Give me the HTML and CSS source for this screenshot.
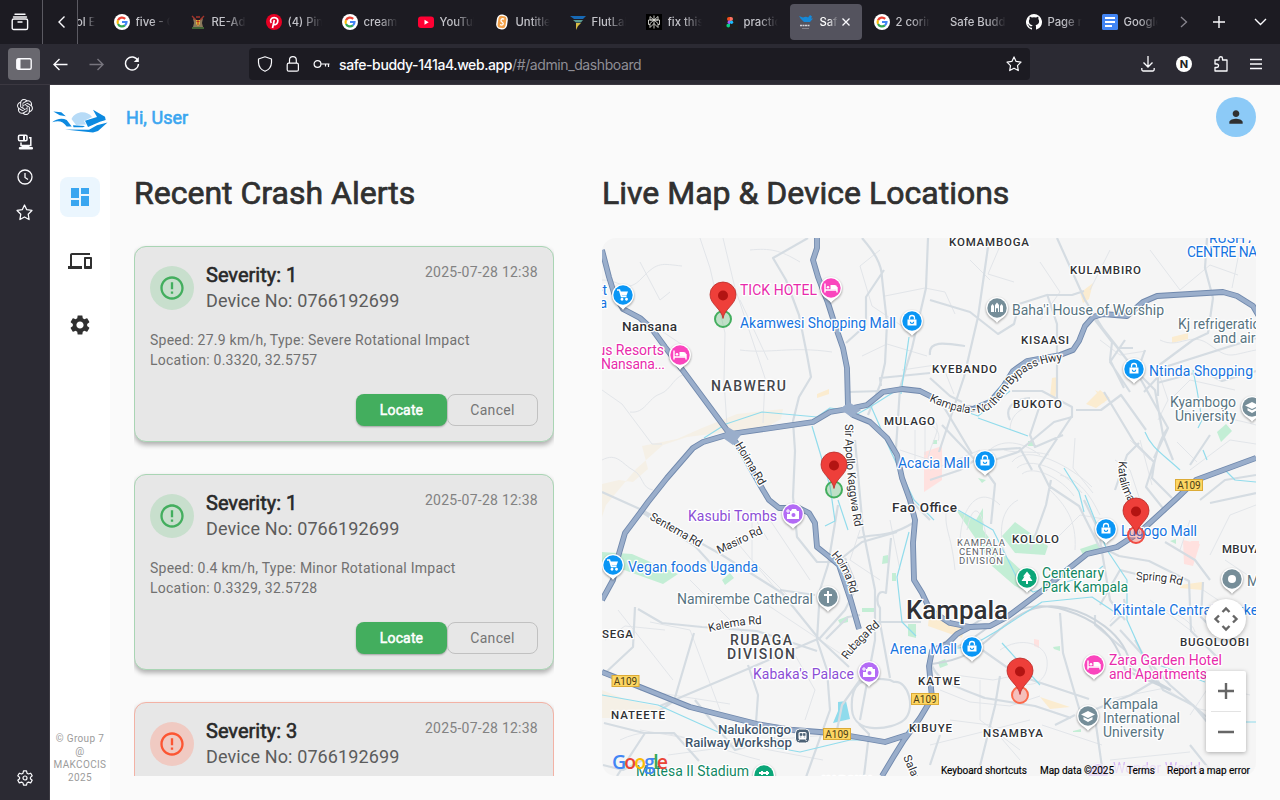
FILE: index.html
```html
<!DOCTYPE html>
<html lang="en">
<head>
<meta charset="utf-8">
<title>Safe Buddy</title>
<link rel="stylesheet" href="styles.css">
</head>
<body>
<svg class="defs" width="0" height="0">
  <defs>
    <symbol id="google" viewBox="0 0 16 16"><circle cx="8" cy="8" r="8" fill="#fff"/><g fill="none" stroke-width="2.2"><path d="M4 6.2A4.5 4.5 0 0 1 11.2 4.9" stroke="#ea4335"/><path d="M4 6.2A4.5 4.5 0 0 0 4 9.9" stroke="#fbbc05"/><path d="M4 9.9A4.5 4.5 0 0 0 10.9 11.4" stroke="#34a853"/><path d="M8 8h4.5A4.5 4.5 0 0 1 10.9 11.4" stroke="#4285f4"/></g></symbol>
    <symbol id="star" viewBox="0 0 16 16"><path d="M8 .9l2.1 4.5 4.900.7-3.500 3.500.8 5L8 12.200l-4.300 2.400.8-5L1 6.100l4.900-.7z" fill="none" stroke="currentColor" stroke-width="1.2" stroke-linejoin="round"/></symbol>
    <symbol id="alert" viewBox="0 0 24 24"><path fill="currentColor" d="M11 15h2v2h-2zm0-8h2v6h-2zm.99-5C6.47 2 2 6.48 2 12s4.47 10 9.99 10C17.52 22 22 17.52 22 12S17.52 2 11.99 2zM12 20c-4.42 0-8-3.58-8-8s3.58-8 8-8 8 3.58 8 8-3.58 8-8 8z"/></symbol>
    <symbol id="gear" viewBox="0 0 24 24"><path fill="currentColor" d="M19.14 12.94c.04-.3.06-.61.06-.94 0-.32-.02-.64-.07-.94l2.03-1.58c.18-.14.23-.41.12-.61l-1.92-3.32c-.12-.22-.37-.29-.59-.22l-2.39.96c-.5-.38-1.03-.7-1.62-.94l-.36-2.54c-.04-.24-.24-.41-.48-.41h-3.84c-.24 0-.43.17-.47.41l-.36 2.54c-.59.24-1.13.57-1.62.94l-2.39-.96c-.22-.08-.47 0-.59.22L2.74 8.87c-.12.21-.08.47.12.61l2.03 1.58c-.05.3-.09.63-.09.94s.02.64.07.94l-2.03 1.58c-.18.14-.23.41-.12.61l1.92 3.32c.12.22.37.29.59.22l2.39-.96c.5.38 1.03.7 1.62.94l.36 2.54c.05.24.24.41.48.41h3.84c.24 0 .44-.17.47-.41l.36-2.54c.59-.24 1.13-.56 1.62-.94l2.39.96c.22.08.47 0 .59-.22l1.92-3.32c.12-.22.07-.47-.12-.61l-2.01-1.58zM12 15.6c-1.98 0-3.6-1.62-3.6-3.6s1.62-3.6 3.6-3.6 3.6 1.62 3.6 3.6-1.62 3.6-3.6 3.6z"/></symbol>
    <g id="poi"><path class="poi-rim" d="M0 15C-2 11-11 9-11 0A11 11 0 0 1 11 0C11 9 2 11 0 15z"/><circle r="9.7"/></g>
    <g id="bag"><path fill="#fff" d="M-4.500-1.500H4.500V4.500H-4.500z"/><path d="M-2.500-1.500V-3a2.500 2.500 0 0 1 5 0V-1.500" fill="none" stroke="#fff" stroke-width="1.300"/><path d="M-1.700 0.800a1.700 1.700 0 0 0 3.400 0" fill="none" stroke="#0a96f5" stroke-width="1.2"/></g>
    <g id="cart" fill="none" stroke="#fff" stroke-width="1.500"><path d="M-6-5h2.500l2 6.500h5"/><path d="M-3-3.500h8l-1.500 4h-5z" fill="#fff" stroke="none"/><circle cx="-1" cy="4.200" r=".7"/><circle cx="3.500" cy="4.200" r=".7"/></g>
    <g id="bed" fill="none" stroke="#fff" stroke-width="1.400"><path d="M-6-4.500V4.500M-6 2H6M6 4.500V-1"/><path d="M-.5-3H3.500a2.500 2 0 0 1 2.500 2V1.500H-.5z" fill="#fff" stroke="none"/><circle cx="-3" cy="-.8" r="1.300" fill="#fff" stroke="none"/></g>
    <g id="camera"><path fill="#fff" d="M-2-3l1-2H3l1 2H6V5H-6V0h3v-3z"/><circle cx="0.500" cy="1" r="2" fill="#b36bf5"/><path d="M-5-5v4M-7-3h4" stroke="#fff" stroke-width="1"/></g>
    <g id="cap"><path fill="#fff" d="M0-5L7-1.500 0 2-7-1.500zM-4.500 1V3.500L0 6l4.500-2.500V1L0 3.300z"/></g>
    <g id="pin"><path fill="#ee3f3a" stroke="#b92b28" stroke-width=".8" d="M0 0C-1.500-10-13-14-13-24A13 12.500 0 0 1 13-24C13-14 1.500-10 0 0z"/><circle cy="-23" r="5" fill="#b31412"/></g>
    <g id="shield"><rect x="-13.500" y="-5.500" width="27" height="11" fill="#fdd663" stroke="#dcab37"/><text y="3.600" text-anchor="middle" class="shield-text">A109</text></g>
    <g id="hw">
      <path d="M602 250l7 27 5 16 9 16 17 9 12 11 13 18 16 21 48 65 8 11 26 46 6 10 10 8 20 0 10 5 6 10 2 24 10 8 12 10 12 36 8 28M817 238l0 10-4 12 5 17 10 26 7 22 8 23 4 20 1 40"/>
      <path d="M602 600l11-20 5-23 7-24 15-20 8-11 19-24 26-30 10-6 27-8 83-12 17-10 18-3 19-4 16-13 19-3 18 2 10 5 20 11 23 2 17-7 13-15 10-16 14-10 33-6 13-5 6-9 6-15 8-9 10-3 24 2 16-14 14-6 66-4 14 4 16 10 8 14"/>
      <path d="M848 410l5 5 17 7 17 16 10 17 5 23 8 22 5 20-2 23 1 37 8 13 8 17 20 13 20 4 20-1 17-9 36-27 24-20 20-16 30-7 23-15 36-33 20-19 60-22M970 627l-13 7-10 10-15 7-3 15 3 32-12 20-16 22-10 16-12 20M602 672l38 15 50 20 67 17 36 6 40 3 52 9 22-7"/>
    </g>
  </defs>
</svg>

<div class="tabbar">
  <div class="tab-tool first"><svg width="18" height="18" viewBox="0 0 18 18" fill="none" stroke="#fbfbfe" stroke-width="1.400" stroke-linecap="round"><path d="M4 1.200h10M2.500 4h13"/><rect x="1.200" y="6" width="15.400" height="10.500" rx="1.600"/><path d="M7 9h4"/></svg></div>
  <div class="tab-tool second"><svg width="9" height="14" viewBox="0 0 9 14" fill="none" stroke="#fbfbfe" stroke-width="1.400"><path d="M7.500 1.500L2 7l5.500 5.500"/></svg></div>
  <div class="tab partial"><span>ol E</span></div>
  <div class="tab"><svg width="16" height="16"><use href="#google"/></svg><span>five - G</span></div>
  <div class="tab"><svg width="16" height="16" viewBox="0 0 16 16"><path d="M3 4l3 2h4l3-2-1 5 1 4H3l1-4z" fill="#8a7a5c"/><path d="M2 2l4 4M14 2l-4 4M6 3h4" stroke="#a5342b" stroke-width="1.300"/><path d="M6 6h4v4l-2 2-2-2z" fill="#d7b83e"/><path d="M6.500 7.500h3M8 6v5" stroke="#b4281f"/><path d="M2 14h12" stroke="#4c7b3d" stroke-width="1.500"/></svg><span>RE-Adm</span></div>
  <div class="tab"><svg width="16" height="16" viewBox="0 0 16 16"><circle cx="8" cy="8" r="8" fill="#e60023"/><path d="M6.500 14L8.300 6M5.300 9.100C3.300 6.300 5.200 3.700 8.200 3.700c3 0 4.200 2.200 3.400 4.600-.8 2.500-3 2.900-4 1.400" fill="none" stroke="#fff" stroke-width="1.700"/></svg><span>(4) Pint</span></div>
  <div class="tab"><svg width="16" height="16"><use href="#google"/></svg><span>cream</span></div>
  <div class="tab"><svg width="16" height="16" viewBox="0 0 16 16"><rect y="2.500" width="16" height="11.500" rx="3" fill="#ff0033"/><path d="M6.500 5.800v5l4.200-2.500z" fill="#fff"/></svg><span>YouTube</span></div>
  <div class="tab"><svg width="16" height="16" viewBox="0 0 16 16"><rect x="2.500" y=".5" width="11" height="15" rx="5" fill="#fff" transform="rotate(8 8 8)"/><rect x="4" y="2" width="8" height="12" rx="3" fill="#f2a14a" transform="rotate(8 8 8)"/><path d="M10.200 5.200C7.500 3.700 5.800 6.700 8 8s1.500 4-2 2.600" fill="none" stroke="#fff" stroke-width="1.300"/></svg><span>Untitled</span></div>
  <div class="tab"><svg width="16" height="16" viewBox="0 0 16 16"><path d="M0 2h16l-3 3H4z" fill="#1769b5"/><path d="M3 6h10l-2 2.500H6z" fill="#5c9b91"/><path d="M6 9h5l-3 3-2 4z" fill="#d8bd45"/></svg><span>FlutLab</span></div>
  <div class="tab"><svg width="16" height="16" viewBox="0 0 16 16"><rect width="16" height="16" fill="#000"/><path d="M8 1.500v13M4 2.500l4 3.500 4-3.500v3.500H4zM4 13.500l4-4 4 4V9.500M4 13.500V9.500M2.500 6h11v4.500H12M2.500 6v4.500H4M8 6l-4 3.500M8 6l4 3.500" fill="none" stroke="#d8d8d3" stroke-width=".9"/></svg><span>fix this</span></div>
  <div class="tab"><svg width="16" height="16" viewBox="0 0 16 16"><rect width="16" height="16" fill="#1e1e1e"/><path d="M8 3H7a2 2 0 0 0 0 4h1z" fill="#f24e1e"/><path d="M8 3h1a2 2 0 0 1 0 4H8z" fill="#ff7262"/><path d="M8 6.500H7a1.800 1.800 0 0 0 0 3.500h1z" fill="#a259ff"/><circle cx="9.500" cy="8.200" r="1.700" fill="#1abcfe"/><path d="M8 10H7a1.800 1.800 0 1 0 1 1.500z" fill="#0acf83"/></svg><span>practic</span></div>
  <div class="tab active"><svg width="16" height="16" viewBox="0 0 16 16"><path d="M1 2l4 1.500c2-1 4-1 5 0L12 1l2 1.500-1 2 2 0-3 3.500H6L2.500 4.500z" fill="#1689d8"/><path d="M2 11.500h10" stroke="#d0d0d6" stroke-width="1.600" stroke-dasharray="2 .5"/><path d="M4 14.500h7" stroke="#85848d"/></svg><span>Safe</span><svg class="close" width="8" height="8" viewBox="0 0 8 8"><path d="M.5.5l7 7m0-7l-7 7" stroke="#fbfbfe" stroke-width="1.300"/></svg></div>
  <div class="tab"><svg width="16" height="16"><use href="#google"/></svg><span>2 corint</span></div>
  <div class="tab"><span class="wide">Safe Buddy</span></div>
  <div class="tab"><svg width="16" height="16" viewBox="0 0 16 16"><path fill="#fff" d="M8 0a8 8 0 0 0-2.500 15.600c.4.100.5-.2.500-.4v-1.500c-2 .5-2.700-.8-2.900-1.400-.1-.3-.6-1-1-1.200-.3-.2-.8-.6 0-.6.700 0 1.200.6 1.400.9.800 1.300 2 1 2.600.700.100-.5.300-.9.500-1.100-1.900-.2-3.700-1-3.700-4 0-.9.300-1.600.8-2.100-.1-.2-.3-1 .1-2.100 0 0 .7-.2 2.200.8a7 7 0 0 1 4 0c1.500-1 2.200-.8 2.200-.8.400 1.100.2 1.900.1 2.100.5.600.8 1.300.8 2.100 0 3.100-1.900 3.800-3.600 4 .3.200.5.700.5 1.400v2.800c0 .2.100.5.500.4A8 8 0 0 0 8 0z"/></svg><span>Page n</span></div>
  <div class="tab"><svg width="16" height="16" viewBox="0 0 16 16"><rect width="16" height="16" rx="1.500" fill="#4285f4"/><path d="M3 4h10M3 8h10M3 12h7" stroke="#fff" stroke-width="2"/></svg><span>Google</span></div>
  <div class="tab-end">
    <svg width="8" height="12" viewBox="0 0 8 12" fill="none" stroke="#88868f" stroke-width="1.300"><path d="M1 1l5.500 5L1 11"/></svg>
    <svg width="12" height="12" viewBox="0 0 12 12" stroke="#fbfbfe" stroke-width="1.400"><path d="M6 0v12M0 6h12"/></svg>
    <svg width="13" height="8" viewBox="0 0 13 8" fill="none" stroke="#fbfbfe" stroke-width="1.400"><path d="M1 1l5.500 5.500L12 1"/></svg>
  </div>
</div>

<div class="toolbar">
  <div class="side-toggle"><svg width="16" height="12" viewBox="0 0 16 12"><rect x=".8" y=".8" width="14.400" height="10.400" rx="1.500" fill="none" stroke="#fbfbfe" stroke-width="1.400"/><path d="M1 1h3.500v10H1z" fill="#fbfbfe"/></svg></div>
  <svg class="back" width="15" height="13" viewBox="0 0 15 13" fill="none" stroke="#fbfbfe" stroke-width="1.400"><path d="M14.500 6.500H1M6.500 1L1 6.500 6.500 12"/></svg>
  <svg class="forward" width="15" height="13" viewBox="0 0 15 13" fill="none" stroke="#77757e" stroke-width="1.400"><path d="M.5 6.500H14M8.500 1L14 6.500 8.500 12"/></svg>
  <svg class="reload" width="16" height="16" viewBox="0 0 16 16" fill="none" stroke="#fbfbfe" stroke-width="1.400"><path d="M13.800 4.500A6.500 6.500 0 1 0 14.500 8"/><path d="M14.800 1v5h-5z" fill="#fbfbfe" stroke="none"/></svg>
  <div class="urlbar">
    <svg width="16" height="16" viewBox="0 0 16 16" fill="none" stroke="#fbfbfe" stroke-width="1.200"><path d="M8 .8L14.500 3v3.500C14.300 10.500 12 13.800 8 15.300 4 13.800 1.700 10.500 1.500 6.500V3z" stroke-linejoin="round"/></svg>
    <svg width="16" height="16" viewBox="0 0 16 16" fill="none" stroke="#fbfbfe" stroke-width="1.200"><rect x="2.200" y="7.200" width="11.200" height="8" rx="1.500"/><path d="M4.500 7V4a3.400 3.400 0 0 1 6.800 0v3"/></svg>
    <svg width="17" height="16" viewBox="0 0 17 16" fill="none" stroke="#fbfbfe" stroke-width="1.200"><circle cx="4.500" cy="8" r="3.400"/><path d="M8 8h8.500M15.500 8v3M12.500 8v2.500"/></svg>
    <div class="url"><b>safe-buddy-141a4.web.app</b>/#/admin_dashboard</div>
    <svg class="bookmark" width="16" height="16"><use href="#star"/></svg>
  </div>
  <div class="actions">
    <svg width="14" height="16" viewBox="0 0 14 16" fill="none" stroke="#fbfbfe" stroke-width="1.300"><path d="M7 0v11M2.500 6.500L7 11l4.500-4.500M.8 12v1.500a1.500 1.500 0 0 0 1.500 1.500h9.400a1.500 1.500 0 0 0 1.500-1.500V12"/></svg>
    <div class="notion">N</div>
    <svg width="16" height="16" viewBox="0 0 16 16" fill="none" stroke="#fbfbfe" stroke-width="1.300" stroke-linejoin="round"><path d="M2 6.500V4h4V2.500a1.700 1.700 0 0 1 3.500 0V4H14v11H2v-3.500H3.800a1.700 1.700 0 0 0 0-3.500H2z"/></svg>
    <svg width="12" height="12" viewBox="0 0 12 12" stroke="#fbfbfe" stroke-width="1.300"><path d="M0 1.500h12M0 6h12M0 10.500h12"/></svg>
  </div>
</div>

<div class="body">
  <aside class="browser-side">
    <svg width="16" height="16" viewBox="0 0 24 24"><path fill="#f2f2f6" d="M22.2819 9.8211a5.9847 5.9847 0 0 0-.5157-4.9108 6.0462 6.0462 0 0 0-6.5098-2.9A6.0651 6.0651 0 0 0 4.9807 4.1818a5.9847 5.9847 0 0 0-3.9977 2.9 6.0462 6.0462 0 0 0 .7427 7.0966 5.98 5.98 0 0 0 .511 4.9107 6.051 6.051 0 0 0 6.5146 2.9001A5.9847 5.9847 0 0 0 13.2599 24a6.0557 6.0557 0 0 0 5.7718-4.2058 5.9894 5.9894 0 0 0 3.9977-2.9001 6.0557 6.0557 0 0 0-.7475-7.0729zm-9.022 12.6081a4.4755 4.4755 0 0 1-2.8764-1.0408l.1419-.0804 4.7783-2.7582a.7948.7948 0 0 0 .3927-.6813v-6.7369l2.02 1.1686a.071.071 0 0 1 .038.052v5.5826a4.504 4.504 0 0 1-4.4945 4.4944zm-9.6607-4.1254a4.4708 4.4708 0 0 1-.5346-3.0137l.142.0852 4.783 2.7582a.7712.7712 0 0 0 .7806 0l5.8428-3.3685v2.3324a.0804.0804 0 0 1-.0332.0615L9.74 19.9502a4.4992 4.4992 0 0 1-6.1408-1.6464zM2.3408 7.8956a4.485 4.485 0 0 1 2.3655-1.9728V11.6a.7664.7664 0 0 0 .3879.6765l5.8144 3.3543-2.0201 1.1685a.0757.0757 0 0 1-.071 0l-4.8303-2.7865A4.504 4.504 0 0 1 2.3408 7.872zm16.5963 3.8558L13.1038 8.364 15.1192 7.2a.0757.0757 0 0 1 .071 0l4.8303 2.7913a4.4944 4.4944 0 0 1-.6765 8.1042v-5.6772a.79.79 0 0 0-.407-.667zm2.0107-3.0231l-.142-.0852-4.7735-2.7818a.7759.7759 0 0 0-.7854 0L9.409 9.2297V6.8974a.0662.0662 0 0 1 .0284-.0615l4.8303-2.7866a4.4992 4.4992 0 0 1 6.6802 4.66zM8.3065 12.863l-2.02-1.1638a.0804.0804 0 0 1-.038-.0567V6.0742a4.4992 4.4992 0 0 1 7.3757-3.4537l-.142.0805L8.704 5.459a.7948.7948 0 0 0-.3927.6813zm1.0976-2.3654l2.602-1.4998 2.6069 1.4998v2.9994l-2.5974 1.4997-2.6067-1.4997Z"/></svg>
    <svg width="16" height="16" viewBox="0 0 16 16" fill="none" stroke="#fbfbfe" stroke-width="1.500"><rect x="1.500" y="1.200" width="8.500" height="5.600" rx="1.200"/><path d="M7 1v5.500" stroke-width="2"/><path d="M12 3.800h1.800v7.700H4V8.500"/><path d="M3 13h1.500v-1.500h8V13H15a.8.8 0 0 1 0 2.500H3a1.200 1.200 0 0 1 0-2.500z" fill="#fbfbfe" stroke="none"/></svg>
    <svg width="16" height="16" viewBox="0 0 16 16" fill="none" stroke="#fbfbfe" stroke-width="1.300"><circle cx="8" cy="8" r="7"/><path d="M8 4v4.500l3 2"/></svg>
    <svg width="17" height="17"><use href="#star"/></svg>
    <svg class="bottom" width="16" height="16" viewBox="0 0 16 16" fill="none" stroke="#fbfbfe" stroke-width="1.200" stroke-linejoin="round"><path d="M6.500.8h3l.5 2.400 1.400.8 2.300-.8 1.500 2.600-1.800 1.600v1.300l1.800 1.600-1.500 2.600-2.300-.8-1.400.8-.5 2.300h-3L6 12.900l-1.400-.8-2.300.8L.8 10.300l1.800-1.600V7.400L.8 5.800l1.500-2.600 2.300.8L6 3.200z"/><circle cx="8" cy="8" r="2"/></svg>
  </aside>

  <nav class="nav">
    <svg class="logo" width="56" height="24" viewBox="0 0 56 24"><path d="M19.500 10C23 2 35 1 40 8l-8 4 2 3.500-10 .5z" fill="#b7dbf7"/><path d="M1.300 2.500l8 .8 4.500 4-6-1zM.2 13.300C4 10 10 8.500 14.700 11l5 6.500h-5C11 12.500 7 11 .2 13.300zM41 .8L53 7.700l.7 3.300-5.700 1.700-12 5.300-3-6.300 12-3.700zM21 16.300l12 .8-2 1.200h-9.500zM13 20.500l24 .3 8-4.600 10.500-2.800-9.500 8.600-5 1.500z" fill="#0d8ae0"/></svg>
    <div class="nav-item selected"><svg width="24" height="24" viewBox="0 0 24 24"><path fill="#3aa6f0" d="M3 13h8V3H3v10zm0 8h8v-6H3v6zm10 0h8V11h-8v10zm0-18v6h8V3h-8z"/></svg></div>
    <div class="nav-item"><svg width="24" height="24" viewBox="0 0 24 24"><path fill="#303030" d="M4 6h18V4H4c-1.100 0-2 .9-2 2v11H0v3h14v-3H4V6zm19 2h-6c-.55 0-1 .45-1 1v10c0 .55.45 1 1 1h6c.55 0 1-.45 1-1V9c0-.55-.45-1-1-1zm-1 9h-4v-7h4v7z"/></svg></div>
    <div class="nav-item"><svg class="gear" width="24" height="24"><use href="#gear"/></svg></div>
    <div class="copyright">© Group 7<br>@<br>MAKCOCIS<br>2025</div>
  </nav>

  <main class="main">
    <header class="header">
      <div class="greeting">Hi, User</div>
      <div class="avatar"><svg width="20" height="20" viewBox="0 0 24 24"><path fill="#303030" d="M12 12c2.210 0 4-1.790 4-4s-1.790-4-4-4-4 1.790-4 4 1.790 4 4 4zm0 2c-2.670 0-8 1.340-8 4v2h16v-2c0-2.660-5.330-4-8-4z"/></svg></div>
    </header>
    <div class="columns">
      <section class="alerts">
        <h1>Recent Crash Alerts</h1>
        <div class="alert-list">
          <article class="card">
            <div class="card-top"><div class="badge"><svg width="28" height="28"><use href="#alert"/></svg></div><div class="who"><div class="severity">Severity: 1</div><div class="device">Device No: 0766192699</div></div><time>2025-07-28 12:38</time></div>
            <p>Speed: 27.9 km/h, Type: Severe Rotational Impact<br>Location: 0.3320, 32.5757</p>
            <div class="buttons"><button class="locate">Locate</button><button class="cancel">Cancel</button></div>
          </article>
          <article class="card">
            <div class="card-top"><div class="badge"><svg width="28" height="28"><use href="#alert"/></svg></div><div class="who"><div class="severity">Severity: 1</div><div class="device">Device No: 0766192699</div></div><time>2025-07-28 12:38</time></div>
            <p>Speed: 0.4 km/h, Type: Minor Rotational Impact<br>Location: 0.3329, 32.5728</p>
            <div class="buttons"><button class="locate">Locate</button><button class="cancel">Cancel</button></div>
          </article>
          <article class="card severe">
            <div class="card-top"><div class="badge"><svg width="28" height="28"><use href="#alert"/></svg></div><div class="who"><div class="severity">Severity: 3</div><div class="device">Device No: 0766192699</div></div><time>2025-07-28 12:38</time></div>
          </article>
        </div>
      </section>
      <section class="live">
        <h1>Live Map &amp; Device Locations</h1>
        <svg class="map" width="654" height="538" viewBox="602 238 654 538">
          <rect x="602" y="238" width="654" height="538" fill="#f5f5f5"/>
          <!-- land use -->
          <g fill="#f5f0e6">
            <path d="M602 484l17-4 14 2 15-13-6-23 35-7 25-11 35-14 46-5-2 10-14 8-80 10-24 8-27 24-30 36-20 60-14 26z"/>
            <path d="M602 690l25 10 38 8-20 10-43 0z"/>
          </g>
          <g fill="#fbecd0">
            <path d="M817 394l12-5v5l-12 4zM1080 293l13-10-4 16-6 4zM1086 404l14-14 10 8-14 10zM1095 390l12 7-3 6zM1052 378l6-1-3 22-5-2zM1172 337l16-4v6l-16 4zM1180 585l22-3v8l-22-2zM930 605l10 15 25 6-3 12-34-12zM1040 697l30 10-20 2z"/>
          </g>
          <g fill="#c3eed5">
            <path d="M602 552l30 2 46 20-15 10-61-22zM722 580l8-7 4 5-9 7zM883 556l5-1v8l-6 1zM892 573h4v8h-4zM956 510l20 10 7-12v22l16 20 22 20 8 22-14-6-23-20-14-24zM1002 536l13-14 33 24-3 9-30-2zM1080 549l18-6 4 10-18 4zM1217 432l9-8 6 7-5 5-6 6zM1170 541l6-2v5zM1028 441h6v5h-6zM908 624h8v14l-8-2zM838 620l10-4 0 6-8 2zM1053 647l7-1v5l-6-2zM933 440h4v4h-4zM938 662l7-3 3 6-8 3zM1073 731l8-2v3h-8zM862 608h12v4h-12zM978 478l8 2-4 3z"/>
          </g>
          <path fill="#8fdbec" d="M838 702l8-1 4 18-17 4 5-12z"/>
          <g fill="#ffe1df"><path d="M924 452l18-6v34l-18 12zM1183 540l17 4-7 22-9-2zM1034 639l5 1v8l-5-2zM1190 541h9v6z"/></g>
          <!-- tracks -->
          <g class="track">
            <path d="M700 238l10 30 15 65-1 48 3 45M723 238l12 50 20 60 10 30-2 45M602 280c20 0 24 15 40-2s20-14 40-12M602 390l20 14 30 40 10 0M660 330l30 20M602 460c15-8 20 4 31 10s8 18 20 20M630 412c15 2 18-14 30-18s14-20 28-20M640 262l20 38 10-8M750 250c20-2 30 0 50 12M740 350c30 4 50-4 92 2M740 300l28 60"/>
            <path d="M880 250l-20 16 12 40 30 20M885 296l40-8 20 4 10 22M862 356l25-12 40 12M902 370l40-6 12 30M1000 246l-12 28 26 8M1040 262l20 30-20 28M1110 250l-20 40M1150 250l30 40 30-25 28 10M1160 340c20 10 30-10 50 5s20 10 46 5M1100 340l20 15 26-4M1010 430c0-20 20-28 42-25M1075 438l-2 30 20 25M1180 410c30 8 40 5 76 15M1130 440l20 20M1190 470l40-30 26 4M1240 248l-8 40"/>
            <path d="M905 430c0-15 30-15 32-5s-8 20-10 40M915 430v30M925 425v30M985 455c15-20 40-12 55 0M960 545c0-40 20-60 40-40M955 570c-4-40-12-40-8-65M967 530c8-40 20-10 20 25M1008 560c-10-20-10-50 10-60M1050 545l30-30 30 5M1075 550c2-30-10-45-25-60M1012 462c15-20 60 5 80 25M1017 468c12-12 45 0 65 25M1022 474c12-10 40 5 52 22M1060 475c20 5 30 20 40 40"/>
            <path d="M618 610l55 70M650 622l40 8 30 80M640 690l90 14M690 580l60 60M752 510l0 50 40 40M770 520l40 60M735 540l40 48M760 600l90 60M605 640l20-14 40 4M640 730l80 14 120-10M668 755l75-10 80 15M620 740c40-20 80 5 140 20M795 655l20 35-10 30M860 530l-10 30 30 20M890 520l10 50M750 510l18 30"/>
            <path d="M940 690l30 12 40 4 30-10M955 675l38 5 40-8M950 720l40 5 30 35M930 745l100-25M1000 650c20-14 45-7 47 10s-10 30-30 22M980 680l0 40 40 30M1042 725l60 20M1110 622c20-30 80-10 85 10M1150 600l40 30M1210 555l20-40 26-10M1203 590l30 20M1190 520l-10 30M1225 560l30 20M1190 715l20-30 40 10M1105 700l60-12 30 20 46 10M1110 760l80-8"/>
            <path d="M908 425c18-8 35 4 30 16M900 450l30 10M930 470c14-4 25-10 50-20M1004 450c15 4 30 0 45 5M1115 460l15 10 10 30M1140 440l12 45M1170 400l20-20 45 10M990 280l-20-20M1156 365l12 35-10 20M1177 442l20 20"/>
          </g>
          <!-- local roads -->
          <g class="minor">
            <path d="M808 238l-35 20 13 22 13 35 8 40 4 22-12 20-6 24 2 30-2 46 4 40 20 25 20 0 25-20 35-10M862 238c12 14 20 26 20 40l5 45-2 40-5 22-12 30M884 270l-18 27 0 28-20 18M928 238l-2 50-14 60-12 40-4 60 14 60M848 392l68-2 26 14 30 50M881 386l-1-8 50-5"/>
            <path d="M988 247l-10 70-14 60-25 75M1057 238l28 62 20 32 30 38 20 20 8 45 10 25M930 300l40 12 28 22 16-10 5-20 28-9 25 0 12-4M1047 294l10 30 0 80M930 355c-2-15 15-12 35-9M930 378l20 18 12 6M1012 391l30 0 30 16 0 10-18 5-36 30-30 10M1125 340l-15 22 20 30M1093 316l25 32 15 0M1092 316l20 26-2 18 14 28M1207 238l-2 30 8 30-5 35-15 7-35 26 0 30M1145 350l-10 28M1256 338l-88 28-24 26M1157 383l45-12 20 10 34-10M1146 430l-25-35-20 15-25 0M1104 392l30 50 20 20-8 25 20 25M1140 378l28 50-14 30M1168 428c-8 10-14 30-16 50l20 20"/>
            <path d="M1072 416l-33 50 10 20 30 20 20 40 20 10 30 5 40 20 2 50 30 30M930 480l30-10 30-20 30-2 12 22M1040 405l-10 30 5 12 28-12M985 470l10 14-4 40M1030 550l16-45 5-25M942 425l38 40M930 520l-20-20M930 660c5 20 20 25 55 38l50 8 36 12M968 640l50 35M1017 675l72 24M1000 676l-5 30-15 60M1060 613l3 40 18 62 50-20 30-18M1095 615l0 10 30 25M1110 626l16-15-2-12M1135 640l28 50 30 15 15 18M1120 630l50 55 40 35M1095 718l8 56M1190 745l20 25M1075 715l-20 10M1165 542l30 18 15 20M1203 582l-2 35 20 20"/>
            <path d="M602 492l40 18 80 45 60 38 37 46 30 28M640 511l55 35 20 22M638 609l24 14 40 4 55 4 60 20M635 607l-2 40-30 28M694 633l-20 68-15 10M660 706l90-38 70-30 25-28 12-24-12-28M748 665l10 30-2 28M838 505l-10 60-8 25-3 50 10 30 3 40-25 70M855 440l8 90 12 60 0 50-15 80M858 538c20-5 30 0 55-15M891 538l-5 55c-10-5-10 10-6 15l0 15 10 55M780 590l35 5M860 615l-12 2-22 22M876 622l45 0M604 723l40 10 30 0 25 28M645 733l-28 43M860 680l-18 25-5 25M890 680c-30-5-40 5-38 30s40 20 52 10 5-40-10-38zM859 724l10 10-5 42M1010 420c-5-10 0-20 20-22M930 765l10-30"/>
            <path d="M1100 540l10 60 15 20M1100 533l-16-33M1115 490l12-35 12-12M1190 465l20-30M1200 500l25-20 31-5M1210 503l46-10M1140 575l-20-5-20 35M603 765l20 5 20-10M695 700l40 50 40-12"/>
          </g>
          <g class="rail"><path d="M930 655c30-5 45-18 65-33s45-20 70-12 50 20 60 60l45 20M932 664c40-5 50-20 72-38s40-23 62-18 60 24 65 60l40 22M940 645l55-34 12 8"/></g>
          <g class="water">
            <path d="M704 438l22-14 36-12 55 5 13-9 15 2M812 426l18 60 5 35-10 5M897 390l-27 17-18 10M870 404l22 50 22 46 20 20M909 337l-6 42-2 15M939 402l39 14 32-25M978 418l50 18M838 500l10 30M909 532l-12 45 5 45 14 14M602 695l56 10 60 27M762 745l38 7 50-12 28 0M1064 468l15 24 5 20M1145 432c6 15 15 20 35 38M1193 370l4 20 5 30-4 8M1203 450l4 10M1225 470l10 10 21 2M958 510l35 20 25 50 15 12 60-18 10-8M1085 495l22 55 20 30 0 40 18 40 60 22M930 650c45 0 50-10 72-22l40-26 50-5 30 20M1002 643l38 42M1256 722l-14 0"/>
          </g>
          <!-- highways: dark casing under a lighter fill -->
          <use href="#hw" class="highway casing"/>
          <use href="#hw" class="highway fill"/>
          <path d="M728 427l13 8-8 10-10-7zM840 409l9-7 12 8-10 7z" fill="#9aaecb"/>

          <g class="labels place">
            <text x="622" y="331" textLength="55" class="town">Nansana</text>
            <text x="711" y="391" textLength="75" class="area-lg">NABWERU</text>
            <text x="949" y="246" textLength="80">KOMAMBOGA</text>
            <text x="1070" y="274" textLength="71">KULAMBIRO</text>
            <text x="1021" y="344" textLength="48">KISAASI</text>
            <text x="932" y="373" textLength="65">KYEBANDO</text>
            <text x="1013" y="408" textLength="49">BUKOTO</text>
            <text x="884" y="425" textLength="51">MULAGO</text>
            <text x="892" y="512" textLength="65" class="town">Fao Office</text>
            <g class="dim"><text x="957" y="546" textLength="48">KAMPALA</text><text x="959" y="555" textLength="45">CENTRAL</text><text x="959" y="564" textLength="44">DIVISION</text></g>
            <text x="1012" y="543" textLength="47">KOLOLO</text>
            <text x="1222" y="553" textLength="40">MBUYA</text>
            <text x="1180" y="646" textLength="69">BUGOLOOBI</text>
            <text x="602" y="638" textLength="31">SEGA</text>
            <text x="730" y="645" textLength="62" class="area-lg">RUBAGA</text><text x="727" y="659" textLength="68" class="area-lg">DIVISION</text>
            <text x="611" y="719" textLength="54">NATEETE</text>
            <text x="918" y="685" textLength="42">KATWE</text>
            <text x="909" y="732" textLength="43">KIBUYE</text>
            <text x="983" y="737" textLength="60">NSAMBYA</text>
            <text x="822" y="784" textLength="52">KABOWA</text>
            <text x="906" y="619" textLength="102" class="city">Kampala</text>
          </g>
          <g class="labels road">
            <path id="h1" fill="none" stroke="none" d="M735 445L762 490"/><text><textPath href="#h1" textLength="48">Hoima Rd</textPath></text>
            <path id="h2" fill="none" stroke="none" d="M831 555Q847 572 851 599"/><text><textPath href="#h2" textLength="44">Hoima Rd</textPath></text>
            <path id="s1" fill="none" stroke="none" d="M845 424Q845 475 856 534"/><text><textPath href="#s1" textLength="104">Sir Apollo Kaggwa Rd</textPath></text>
            <path id="s2" fill="none" stroke="none" d="M649 519L704 550"/><text><textPath href="#s2" textLength="58">Sentema Rd</textPath></text>
            <path id="m1" fill="none" stroke="none" d="M719 554L766 532"/><text><textPath href="#m1" textLength="49">Masiro Rd</textPath></text>
            <path id="k1" fill="none" stroke="none" d="M709 632Q740 624 765 624"/><text><textPath href="#k1" textLength="53">Kalema Rd</textPath></text>
            <path id="r1" fill="none" stroke="none" d="M847 660Q862 640 885 622"/><text><textPath href="#r1" textLength="48">Rubaga Rd</textPath></text>
            <path id="n1" fill="none" stroke="none" d="M929 401C950 411 976 418 990 409C1008 398 1012 364 1061 361"/><text><textPath href="#n1" textLength="154">Kampala - Northern Bypass Hwy</textPath></text>
            <path id="kt" fill="none" stroke="none" d="M1119 461Q1116 482 1130 504"/><text><textPath href="#kt" textLength="44">Katalima</textPath></text>
            <path id="sp" fill="none" stroke="none" d="M1136 580Q1165 580 1184 586"/><text><textPath href="#sp" textLength="46">Spring Rd</textPath></text>
            <path id="sl" fill="none" stroke="none" d="M903 757L915 785"/><text><textPath href="#sl">Salama</textPath></text>
          </g>
          <use href="#shield" x="1189" y="485"/><use href="#shield" x="625.500" y="681"/><use href="#shield" x="837" y="734"/><use href="#shield" x="925" y="699"/>
          <g class="labels shop">
            <text x="607" y="295" text-anchor="end">Market</text><text x="607" y="308" text-anchor="end">a</text>
            <text x="740" y="328" textLength="156">Akamwesi Shopping Mall</text>
            <text x="1209" y="243" textLength="56">RUSH  AL</text><text x="1187" y="257" textLength="86">CENTRE NAAL</text>
            <text x="1149" y="376" textLength="104">Ntinda Shopping</text>
            <text x="898" y="468" textLength="72">Acacia Mall</text><text x="1121" y="536" textLength="76">Lugogo Mall</text>
            <text x="628" y="572" textLength="130">Vegan foods Uganda</text><text x="890" y="654" textLength="67">Arena Mall</text>
            <text x="1113" y="615" textLength="150">Kitintale Central Market</text>
          </g>
          <g class="labels hotel"><text x="740" y="295" textLength="77">TICK HOTEL</text><text x="664" y="355" text-anchor="end">us Resorts</text><text x="601" y="369" textLength="64">Nansana...</text><text x="1109" y="665" textLength="113">Zara Garden Hotel</text><text x="1109" y="679" textLength="98">and Apartments</text></g>
          <g class="labels civic"><text x="1012" y="315" textLength="152">Baha'i House of Worship</text><text x="1178" y="329" textLength="90">Kj refrigeration</text><text x="1213" y="343">and air</text><text x="1170" y="407" textLength="66">Kyambogo</text><text x="1175" y="421" textLength="61">University</text><text x="677" y="604" textLength="136">Namirembe Cathedral</text><text x="1103" y="709">Kampala</text><text x="1103" y="723" textLength="77">International</text><text x="1103" y="737" textLength="61">University</text><text x="1247" y="586">Mu</text></g>
          <g class="labels transit"><text x="718" y="734" textLength="73">Nalukolongo</text><text x="685" y="747" textLength="107">Railway Workshop</text></g>
          <g class="labels sight"><text x="688" y="521" textLength="89">Kasubi Tombs</text><text x="753" y="679" textLength="101">Kabaka's Palace</text></g>
          <g class="labels park"><text x="1042" y="578" textLength="62">Centenary</text><text x="1042" y="592" textLength="86">Park Kampala</text><text x="636" y="776" textLength="113">Mutesa II Stadium</text></g>

          <g fill="#0a96f5">
            <g transform="translate(623 295)"><use href="#poi"/><use href="#cart"/></g><g transform="translate(613 565)"><use href="#poi"/><use href="#cart"/></g>
            <g transform="translate(912 321)"><use href="#poi"/><use href="#bag"/></g><g transform="translate(1134 369)"><use href="#poi"/><use href="#bag"/></g><g transform="translate(985 461)"><use href="#poi"/><use href="#bag"/></g><g transform="translate(1106 529)"><use href="#poi"/><use href="#bag"/></g><g transform="translate(972 647)"><use href="#poi"/><use href="#bag"/></g>
          </g>
          <g fill="#fa45bd"><g transform="translate(831 288)"><use href="#poi"/><use href="#bed"/></g><g transform="translate(680 355)"><use href="#poi"/><use href="#bed"/></g><g transform="translate(1094 665)"><use href="#poi"/><use href="#bed"/></g></g>
          <g fill="#b36bf5"><g transform="translate(793 514)"><use href="#poi"/><use href="#camera"/></g><g transform="translate(869 672)"><use href="#poi"/><use href="#camera"/></g></g>
          <g fill="#768e99">
            <g transform="translate(997 308)"><use href="#poi"/><path d="M-6 4V-2l1.500-2L-3-2v6zM3 4V-2l1.500-2L6-2v6zM-2 4V-3L0-5.500 2-3V4H1V1a1 1 0 0 0-2 0V4z" fill="#fff"/></g>
            <g transform="translate(828 597)"><use href="#poi"/><path d="M0-6V6M-4-2h8" stroke="#fff" stroke-width="2"/></g>
            <g transform="translate(1252 407)"><use href="#poi"/><use href="#cap"/></g><g transform="translate(1088 716)"><use href="#poi"/><use href="#cap"/></g>
            <g transform="translate(1232 579)"><use href="#poi"/><circle r="4" fill="#fff"/></g>
          </g>
          <g transform="translate(1027 578)" fill="#0ba678"><use href="#poi"/><path d="M0-6.500L4-1.500H2.500L5.500 3H1v3h-2V3h-4.500L-2.500-1.500H-4z" fill="#fff"/></g>
          <g transform="translate(764 775)" fill="#0ba678"><use href="#poi"/><path d="M-5-2h10M-2-4v4M3-4v4" stroke="#fff" stroke-width="2"/></g>
          <g transform="translate(802.500 736)"><rect x="-7" y="-7" width="14" height="14" rx="4" fill="#4b6175" stroke="#fff"/><rect x="-4" y="-4" width="8" height="7.500" rx="1.500" fill="#fff"/><path d="M-2.500-2.500h2v2h-2zM.7-2.500h2v2h-2zM-2.500 1h1.400M1.300 1h1.400" fill="#4b6175" stroke="#4b6175" stroke-width=".6"/><path d="M-3 3.500l-1 1.500M3 3.500l1 1.500" stroke="#fff"/></g>

          <g class="spot ok"><circle cx="723" cy="319" r="8"/><circle cx="834" cy="489.500" r="8"/></g>
          <g class="spot bad"><circle cx="1136" cy="535" r="8"/><circle cx="1020" cy="695" r="8" class="orange"/></g>
          <use href="#pin" x="723" y="318.500"/><use href="#pin" x="834" y="488.500"/><use href="#pin" x="1136" y="534.500"/><use href="#pin" x="1020" y="694.500"/>

          <g opacity=".45" fill="#b36bf5"><use href="#poi" x="1098" y="774"/><text x="1113" y="773" textLength="88" font-size="14">Wonder World</text></g>
          <rect x="936" y="765" width="320" height="11" fill="#f5f5f5" opacity=".6"/>
          <g class="legal"><text x="941" y="774" textLength="86">Keyboard shortcuts</text><text x="1040" y="774" textLength="74">Map data ©2025</text><text x="1127" y="774" textLength="28">Terms</text><text x="1167" y="774" textLength="83">Report a map error</text></g>
          <text x="612" y="769" textLength="56" class="google-word"><tspan fill="#4285f4">G</tspan><tspan fill="#ea4335">o</tspan><tspan fill="#fbbc04">o</tspan><tspan fill="#4285f4">g</tspan><tspan fill="#34a853">l</tspan><tspan fill="#ea4335">e</tspan></text>
          <g class="control"><circle cx="1226" cy="619" r="20" fill="#fff"/><path d="M1222.500 612l3.500-3.500 3.500 3.500M1222.500 626l3.500 3.500 3.500-3.500M1219 615.500l-3.500 3.500 3.500 3.500M1233 615.500l3.500 3.500-3.500 3.500" fill="none" stroke="#666" stroke-width="2.400"/></g>
          <g class="control"><rect x="1206" y="671" width="40" height="81" rx="2" fill="#fff"/><path d="M1211 711.500h30" stroke="#e3e3e3"/><path d="M1218 691h16M1226 683v16M1218 732h16" stroke="#666" stroke-width="2.400"/></g>
        </svg>
      </section>
    </div>
  </main>
</div>
</body>
</html>
```

FILE: styles.css
```css
* { box-sizing: border-box; }
body { margin: 0; width: 1280px; height: 800px; overflow: hidden; display: flex; flex-direction: column; background: #fafafa; font-family: Roboto, "Liberation Sans", sans-serif; }
svg { flex: none; display: block; }
.defs { position: absolute; }

/* browser tabs */
.tabbar { height: 44px; flex: none; display: flex; align-items: center; background: #1c1b22; color: #c3c3c9; font: 500 11.3px Inter, sans-serif; }
.tab-tool { height: 44px; display: flex; align-items: center; justify-content: center; border-right: 1px solid #5b5a62; }
.first { width: 43px; padding-right: 3px; }
.second { width: 35px; padding-left: 2px; }
.tab { width: 72px; height: 36px; margin-right: 4px; padding: 0 8px; flex: none; display: flex; align-items: center; gap: 5.5px; border-radius: 4px; }
.tab span { width: 34px; overflow: hidden; white-space: nowrap; line-height: 18px; -webkit-mask-image: linear-gradient(90deg, #000 45%, transparent); mask-image: linear-gradient(90deg, #000 45%, transparent); }
.tab .wide { width: 56px; -webkit-mask-image: linear-gradient(90deg, #000 65%, transparent); mask-image: linear-gradient(90deg, #000 65%, transparent); }
.tab.partial { width: 24px; padding: 0; }
.tab.partial span { width: 17px; text-indent: -2px; }
.tab.active { background: #54535e; color: #fff; }
.tab.active span { width: 18px; }
.tab.active .close { margin-left: -1px; }
.tab-end { display: flex; align-items: center; padding-left: 10px; }
.tab-end svg + svg { margin-left: 25px; }
.tab-end svg + svg + svg { margin-left: 29px; }

/* browser toolbar */
.toolbar { height: 41px; flex: none; display: flex; align-items: center; padding-left: 8px; background: #2b2a33; border-bottom: 1px solid #3b3841; }
.side-toggle { width: 32px; height: 32px; border-radius: 4px; background: #69686f; display: flex; align-items: center; justify-content: center; }
.back { margin-left: 13px; }
.forward { margin-left: 21px; }
.reload { margin-left: 20px; }
.urlbar { margin-left: 109px; width: 781px; height: 32px; padding: 0 8px; display: flex; align-items: center; gap: 12px; border-radius: 4px; background: #1c1b22; }
.url { flex: 1; margin-left: -3px; padding-top: 1px; color: #8f8e96; font: 400 14px Inter, sans-serif; letter-spacing: -0.4px; white-space: nowrap; }
.url b { font-weight: 500; color: #fbfbfe; }
.bookmark { color: #fbfbfe; }
.actions { margin-left: 111px; display: flex; align-items: center; gap: 21px; }
.notion { width: 16px; height: 16px; border-radius: 50%; background: #fff; color: #222; font: 700 11px/16px Inter, sans-serif; text-align: center; }

.body { flex: 1; min-height: 0; display: flex; }
.browser-side { width: 50px; flex: none; display: flex; flex-direction: column; align-items: center; gap: 19px; padding: 14px 0 14px; color: #fbfbfe; background: #2b2a33; border-right: 1px solid #3d3b43; }
.browser-side .bottom { margin-top: auto; }

/* application navigation */
.nav { width: 60px; flex: none; display: flex; flex-direction: column; align-items: center; background: #fff; padding: 24px 0 16px; }
.logo { margin-bottom: 44px; }
.nav-item { width: 40px; height: 40px; margin-bottom: 24px; display: flex; align-items: center; justify-content: center; border-radius: 8px; }
.selected { background: #ebf6fe; }
.gear { color: #303030; }
.copyright { margin-top: auto; font-size: 10px; line-height: 13px; letter-spacing: .35px; text-align: center; color: #9b9b9b; }

.main { flex: 1; min-width: 0; padding: 12px 24px 24px 16px; display: flex; flex-direction: column; }
.header { display: flex; justify-content: space-between; height: 40px; align-items: center; }
.greeting { font-size: 18px; line-height: 24px; letter-spacing: .05px; color: #3aa6f0; -webkit-text-stroke: .6px #3aa6f0; padding-top: 2px; }
.avatar { width: 40px; height: 40px; border-radius: 50%; background: #8ccaf7; display: flex; align-items: center; justify-content: center; }
.columns { display: flex; gap: 48px; padding: 36px 0 0 8px; }
.alerts { width: 420px; flex: none; }
h1 { margin: 0; height: 65px; padding-top: 1px; font-size: 32px; line-height: 38px; font-weight: 400; color: #303030; -webkit-text-stroke: .7px #303030; white-space: nowrap; }
.alert-list { height: 538px; overflow: hidden; padding-top: 8px; display: flex; flex-direction: column; gap: 32px; }

.card { --tone: #43ae5e; --edge: #a9d5b4; --soft: #c8dfcd; height: 196px; flex: none; padding: 15px; display: flex; flex-direction: column; border: 1px solid var(--edge); border-radius: 12px; background: #e7e7e7; box-shadow: 0 3px 5px rgba(0,0,0,.3); }
.card.severe { --tone: #fc5532; --edge: #f3b2a5; --soft: #f0cac2; }
.card-top { display: flex; align-items: flex-start; }
.badge { width: 44px; height: 44px; margin: 4px 12px 0 0; border-radius: 50%; display: flex; align-items: center; justify-content: center; color: var(--tone); background: var(--soft); }
.who { flex: 1; }
.severity { font-size: 20px; line-height: 26px; color: #292929; -webkit-text-stroke: .6px #292929; }
.device { font-size: 18px; line-height: 26px; letter-spacing: .13px; color: #5c5c5c; }
time { font-size: 14px; line-height: 20px; letter-spacing: .25px; color: #828282; }
.card p { margin: 16px 0 0; font-size: 14px; line-height: 20px; letter-spacing: .25px; color: #717171; }
.buttons { margin-top: auto; display: flex; justify-content: flex-end; }
button { height: 32px; width: 91px; padding: 0; border-radius: 8px; font: 400 14px Roboto, sans-serif; letter-spacing: .3px; }
.locate { border: 0; background: #43ae5e; color: #fff; -webkit-text-stroke: .5px #fff; letter-spacing: .15px; box-shadow: 0 1px 2px rgba(0,0,0,.3); }
.cancel { border: 1px solid #c1c1c1; background: none; color: #757575; }

/* map */
.map { border-radius: 14px; font-family: Roboto, sans-serif; }
.track { fill: none; stroke: #e2e5e9; stroke-width: 1; stroke-linejoin: round; }
.minor { fill: none; stroke: #d5dce2; stroke-width: 2.2; stroke-linejoin: round; }
.rail { fill: none; stroke: #cdd5dc; stroke-width: 2; }
.water { fill: none; stroke: #92dcec; stroke-width: 1.2; stroke-linejoin: round; }
.highway { fill: none; stroke-linejoin: round; }
.casing { stroke: #7189ad; stroke-width: 5.8; }
.highway.fill { stroke: #9aaecb; stroke-width: 4; }
.labels { font-size: 14px; paint-order: stroke; stroke: #fff; stroke-width: 2.6px; stroke-linejoin: round; }
.place { font-size: 11.5px; font-weight: 500; fill: #303135; }
.town { font-size: 13.5px; }
.area-lg { font-size: 14px; fill: #44464b; }
.city { font-size: 26px; }
.dim { font-size: 9.5px; fill: #606268; font-weight: 400; }
.road { font-size: 11.5px; fill: #303135; }
.shop { fill: #1673e0; }
.hotel { fill: #e82bab; }
.civic { fill: #587481; }
.transit { fill: #3f566b; font-weight: 500; font-size: 13.3px; }
.sight { fill: #8b4ed6; }
.park { fill: #118762; }
.poi-rim { fill: #fff; filter: drop-shadow(0 1px 1px rgba(0,0,0,.4)); }
.shield-text { font-size: 10px; fill: #4c3d16; }
.spot { stroke-width: 2; }
.ok { fill: rgba(67,174,94,.3); stroke: #43ae5e; }
.bad { fill: rgba(244,67,54,.3); stroke: #f14c43; }
.orange { stroke: #fc6a4b; }
.legal { font-size: 10px; fill: #000; stroke: #000; stroke-width: .15px; }
.google-word { font: 600 19.5px "Open Sans", sans-serif; }
.control { filter: drop-shadow(0 1px 2px rgba(0,0,0,.3)); }
```
